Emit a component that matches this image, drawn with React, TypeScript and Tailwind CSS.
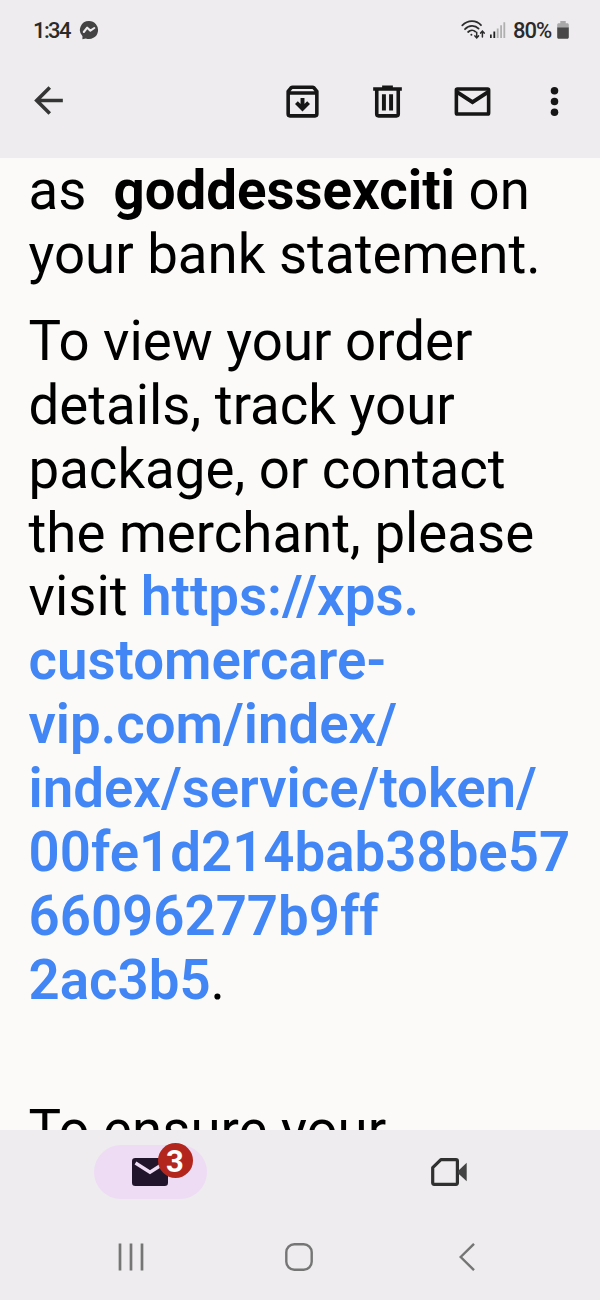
import React from "react";

interface IconProps {
  className?: string;
}

const MessengerIcon: React.FC<IconProps> = ({ className }) => (
  <svg viewBox="0 0 20 20" className={className}>
    <path d="M10 1a9 9 0 1 1-3.2 17.4L3.4 19.3l.1-3A9 9 0 0 1 10 1z" fill="#434343" />
    <path d="M4.8 12l3.4-4.3 3.2 2.9L15.3 8" fill="none" stroke="#eeecee" strokeWidth="2.1" strokeLinejoin="round" strokeLinecap="round" />
  </svg>
);

const WifiIcon: React.FC<IconProps> = ({ className }) => (
  <svg viewBox="0 0 24 20" className={className} fill="none" stroke="#2c2c2c" strokeWidth="1.8" strokeLinecap="round">
    <path d="M1.3 5.4C6.8-.2 15.2-.2 20 5.2" />
    <path d="M4 9.2c4-4.4 10-4.4 13.6-.6" />
    <path d="M7.1 12c2.3-2.2 5.3-2.2 7.2-.4" />
    <circle cx="10.4" cy="14.7" r="1" fill="#2c2c2c" stroke="none" />
    <path d="M15.7 12.3v5M13.9 15.9l1.8 1.9 1.8-1.9" strokeWidth="1.5" />
    <path d="M21.4 17v-5M19.6 13.1l1.8-1.9 1.8 1.9" strokeWidth="1.5" />
  </svg>
);

const SignalIcon: React.FC<IconProps> = ({ className }) => (
  <svg viewBox="0 0 16 18" className={className}>
    <path d="M0 13.5h1.7V17H0zM3.4 10.5h1.8V17H3.4z" fill="#222" />
    <path d="M6.8 7.4h1.8V17H6.8zM10.2 4.3H12V17h-1.8zM13.4 1.2h1.8V17h-1.8z" fill="#b1b0b1" />
  </svg>
);

const BatteryIcon: React.FC<IconProps> = ({ className }) => (
  <svg viewBox="0 0 12 18" className={className}>
    <path d="M3.3 0h5.4v2.2h1.6c.9 0 1.5.6 1.5 1.5V7H.2V3.7c0-.9.6-1.5 1.5-1.5h1.6z" fill="#a9a9a9" />
    <path d="M.2 6.4h11.6v9.8c0 .9-.6 1.5-1.5 1.5H1.7c-.9 0-1.5-.6-1.5-1.5z" fill="#484848" />
  </svg>
);

const BackIcon: React.FC<IconProps> = ({ className }) => (
  <svg viewBox="0 0 24 24" className={className} fill="#353535">
    <path d="M20 11H7.83l5.59-5.59L12 4l-8 8 8 8 1.41-1.41L7.83 13H20v-2z" />
  </svg>
);

const ArchiveIcon: React.FC<IconProps> = ({ className }) => (
  <svg viewBox="0 0 24 24" className={className} fill="none" stroke="#161616" strokeWidth="2">
    <path d="M4 19V6.3L5.6 4.4Q6 4 6.5 4h11q.5 0 .9.4L20 6.3V19q0 1-1 1H5q-1 0-1-1zM4 7.3h16" strokeLinejoin="round" />
    <path d="M12 10v5.5M8.6 12.6L12 16l3.4-3.4" strokeWidth="2.2" />
  </svg>
);

const TrashIcon: React.FC<IconProps> = ({ className }) => (
  <svg viewBox="0 0 24 24" className={className} fill="none" stroke="#161616" strokeWidth="2">
    <path d="M4 5h16M9 4h6" />
    <path d="M6 5v14q0 1 1 1h10q1 0 1-1V5" />
    <path d="M10 8v9M14 8v9" strokeWidth="2.2" />
  </svg>
);

const MailIcon: React.FC<IconProps> = ({ className }) => (
  <svg viewBox="0 0 24 24" className={className} fill="none" stroke="#161616" strokeWidth="2">
    <rect x="3" y="5" width="18" height="14" rx="0.6" strokeLinejoin="round" />
    <path d="M3.2 6.6L12 12.4l8.8-5.8" strokeWidth="2.2" />
  </svg>
);

const MoreIcon: React.FC<IconProps> = ({ className }) => (
  <svg viewBox="0 0 24 24" className={className} fill="#161616">
    <circle cx="12" cy="6" r="2.1" />
    <circle cx="12" cy="12" r="2.1" />
    <circle cx="12" cy="18" r="2.1" />
  </svg>
);

const MailFilledIcon: React.FC<IconProps> = ({ className }) => (
  <svg viewBox="0 0 36 28" className={className}>
    <rect width="36" height="28" rx="3.3" fill="#21152b" />
    <path d="M3.5 5L18 14.2 32.5 5" fill="none" stroke="#eedcf5" strokeWidth="3.3" />
  </svg>
);

const VideoIcon: React.FC<IconProps> = ({ className }) => (
  <svg viewBox="0 0 36 28" className={className}>
    <path
      d="M1.7 9.7L9.9 1.7H25q1.4 0 1.4 1.4v21.7q0 1.5-1.4 1.5H3.2q-1.5 0-1.5-1.5z"
      fill="none"
      stroke="#303030"
      strokeWidth="3.2"
      strokeLinejoin="round"
    />
    <path d="M27 13l8.7-8.2v18.5L27 15.2z" fill="#434343" />
  </svg>
);

const toolbarActions = [
  { name: "Archive", Icon: ArchiveIcon },
  { name: "Delete", Icon: TrashIcon },
  { name: "Mark unread", Icon: MailIcon },
];

const linkLines = [
  "customercare-",
  "vip.com/index/",
  "index/service/token/",
  "00fe1d214bab38be57",
  "66096277b9ff",
];

const App: React.FC = () => {
  return (
    <div className="flex h-[1300px] w-[600px] flex-col overflow-hidden bg-[#eeecee] font-['Roboto',sans-serif]">
      {/* Status bar */}
      <div className="flex h-[60px] shrink-0 items-center justify-between pl-[33px] pr-[31px] text-[22px] font-medium text-[#2a2a2a]">
        <div className="flex items-center gap-2">
          <span className="w-[38px] whitespace-nowrap tracking-[-1.6px]">1:34</span>
          <MessengerIcon className="size-5" />
        </div>
        <div className="flex items-center">
          <WifiIcon className="h-5 w-6" />
          <SignalIcon className="ml-[5px] h-[18px] w-4" />
          <span className="ml-[7px] w-[41px] whitespace-nowrap tracking-[-1px]">80%</span>
          <BatteryIcon className="ml-[3px] h-[18px] w-3" />
        </div>
      </div>

      {/* Toolbar */}
      <div className="flex h-[98px] shrink-0 items-start pl-[27px] pr-[24px] pt-5">
        <BackIcon className="-mt-px size-[43px]" />
        <div className="ml-auto flex gap-[42px]">
          {toolbarActions.map(({ name, Icon }) => (
            <Icon key={name} className="size-[43px]" />
          ))}
        </div>
        <MoreIcon className="ml-[39px] size-[43px]" />
      </div>

      {/* Message body */}
      <div className="flex h-[972px] shrink-0 flex-col gap-[23px] overflow-hidden whitespace-nowrap bg-[#fbfaf8] pl-[28.5px] pt-px text-[54.6px] leading-[63.9px] text-black">
        <p>
          as&nbsp; <b className="font-bold">goddessexciti</b> on
          <br />
          your bank statement.
        </p>
        <p>
          To view your order
          <br />
          details, track your
          <br />
          package, or contact
          <br />
          the merchant, please
          <br />
          visit{" "}
          <a className="font-semibold text-[#4285f4]">
            https://xps.
            {linkLines.map((line) => (
              <span key={line} className="block">
                {line}
              </span>
            ))}
            2ac3b5
          </a>
          .
        </p>
        <p className="pt-[63px]">To ensure your</p>
      </div>

      {/* App tabs */}
      <div className="flex h-[85px] shrink-0 items-start pt-[15px]">
        <div className="flex w-1/2 justify-center">
          <div className="relative flex h-[54px] w-[113px] items-center justify-center rounded-full bg-[#eedcf5]">
            <MailFilledIcon className="h-7 w-9" />
            <span className="absolute left-[64px] top-[-2px] flex size-[35px] items-center justify-center rounded-full bg-[#b3261e] pt-[2px] text-[31px] leading-none font-bold text-white">
              3
            </span>
          </div>
        </div>
        <div className="flex h-[54px] w-1/2 items-center justify-center pr-[2px]">
          <VideoIcon className="h-7 w-9" />
        </div>
      </div>

      {/* System navigation */}
      <div className="flex h-[85px] shrink-0 items-start pl-[118px] pt-[28px]">
        <svg viewBox="0 0 27 28" className="h-7 w-[27px]" stroke="#757575" strokeWidth="2.7">
          <path d="M2 .5v27M13 .5v27M24 .5v27" />
        </svg>
        <svg viewBox="0 0 28 28" className="ml-[140px] size-7" fill="none" stroke="#757575" strokeWidth="2.4">
          <rect x="1.3" y="1.3" width="25.4" height="25.4" rx="8" />
        </svg>
        <svg viewBox="0 0 16 28" className="ml-[146px] h-7 w-4" fill="none" stroke="#757575" strokeWidth="2.4">
          <path d="M15 .8L1.7 14 15 27.2" />
        </svg>
      </div>
    </div>
  );
};

export default App;
